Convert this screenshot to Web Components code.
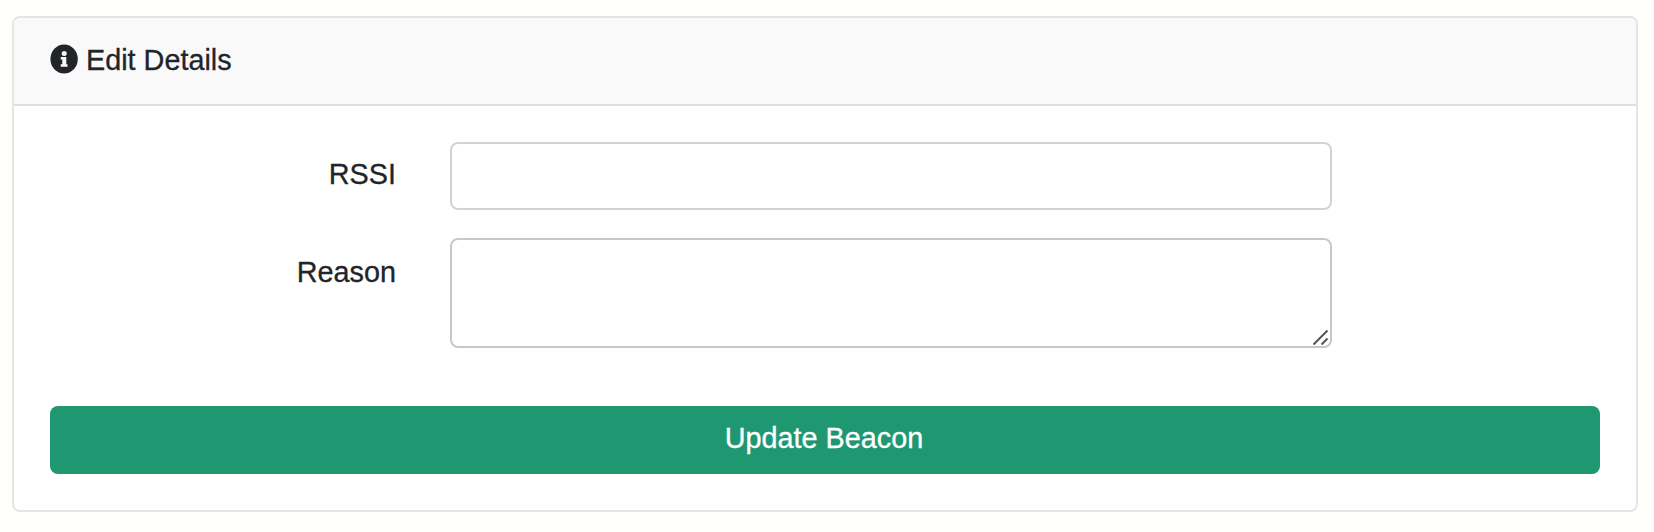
<!DOCTYPE html>
<html lang="en">
<head>
<meta charset="utf-8">
<title>Edit Details</title>
<style>
body { margin: 0; padding: 16px 16px 20px 12px; background: #fffffb; color: #212529; font: 28.8px/46px "Liberation Sans", Arial, sans-serif; -webkit-text-stroke: 0.3px; }
.title { margin-top: -2px; }
</style>
</head>
<body>
<edit-card>
  <info-icon slot="header"></info-icon><span class="title" slot="header">Edit Details</span>
  <form-row label="RSSI"><text-field></text-field></form-row>
  <form-row label="Reason" tall><text-field multiline></text-field></form-row>
  <submit-button>Update Beacon</submit-button>
</edit-card>
<script>
const define = (name, html) => customElements.define(name, class extends HTMLElement {
  constructor() {
    super();
    this.attachShadow({ mode: "open" }).innerHTML = html;
  }
  connectedCallback() {
    const label = this.shadowRoot.querySelector("label");
    if (label) label.textContent = this.getAttribute("label");
  }
});

define("edit-card", `<style>
:host { display: block; box-sizing: border-box; width: 1626px; height: 496px; border: 2px solid #e4e5e7; border-radius: 8px; background: #fff; overflow: hidden; }
header { box-sizing: border-box; height: 88px; padding: 0 36px; border-bottom: 2px solid #dfdfdf; background: #f9f9f9; display: flex; align-items: center; gap: 8px; }
main { padding: 36px; display: flex; flex-direction: column; gap: 28px; }
</style><header><slot name="header"></slot></header><main><slot></slot></main>`);

define("info-icon", `<style>
:host { display: block; width: 28px; height: 30px; margin-top: -4px; }
svg { display: block; }
</style><svg width="28" height="30" viewBox="0 0 28 30"><ellipse cx="14.1" cy="15" rx="13.7" ry="14.6" fill="#212529"/><circle cx="14.2" cy="9.6" r="2.5" fill="#f9f9f9"/><path d="M10.700 13h5.600v7.200h1.200v2.600h-6.800v-2.600h1.600v-4.600h-1.600z" fill="#f9f9f9"/></svg>`);

define("form-row", `<style>
:host { display: grid; grid-template-columns: 346px 882px; column-gap: 54px; }
label { text-align: right; padding-top: 9px; }
:host([tall]) label { padding-top: 11px; }
</style><label></label><slot></slot>`);

define("text-field", `<style>
:host { display: block; box-sizing: border-box; height: 68px; border: 2px solid #ced4da; border-radius: 8px; background: #fff; }
:host([multiline]) { display: flex; justify-content: flex-end; align-items: flex-end; height: 110px; border-color: #c8c8c8; }
svg { display: none; }
:host([multiline]) svg { display: block; }
</style><svg width="18" height="18" viewBox="0 0 18 18" fill="none" stroke="#555" stroke-width="2"><path d="M1.500 16.500L15.500 2.500M9.500 16.500l6-6"/></svg>`);

define("submit-button", `<style>
:host { display: block; margin-top: 30px; }
button { display: block; box-sizing: border-box; width: 100%; height: 68px; margin: 0; padding: 0 2px 4px 0; border: 0; border-radius: 8px; background: #1f9872; color: #fff; font: inherit; -webkit-text-stroke: 0.3px; }
</style><button type="button"><slot></slot></button>`);
</script>
</body>
</html>
